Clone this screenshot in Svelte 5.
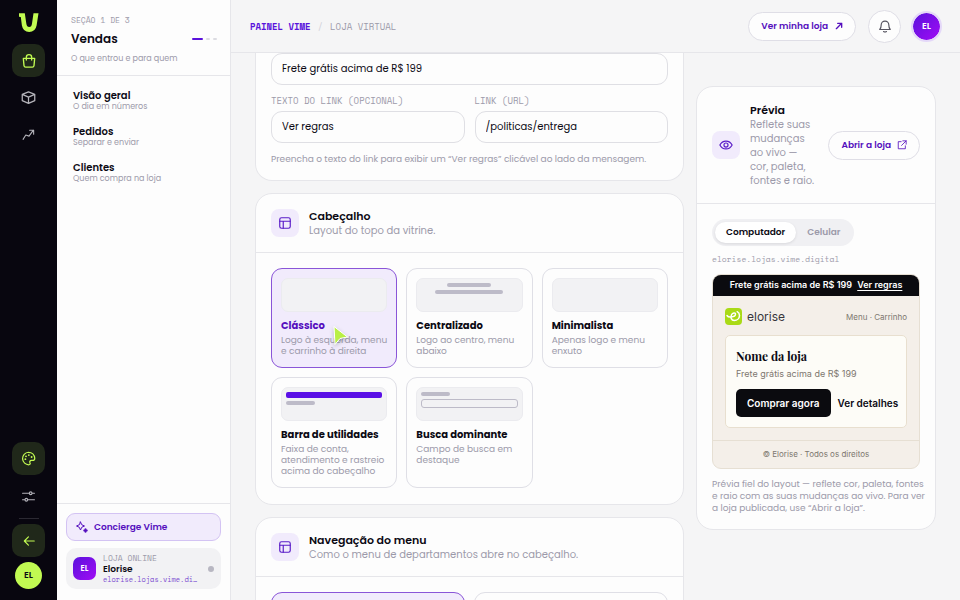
<script>
  let selected = $state("Clássico");
  let device = $state("Computador");
  let message = $state("Frete grátis acima de R$ 199");
  let linkText = $state("Ver regras");
  let linkUrl = $state("/politicas/entrega");

  const pages = [
    { name: "Visão geral", info: "O dia em números" },
    { name: "Pedidos", info: "Separar e enviar" },
    { name: "Clientes", info: "Quem compra na loja" },
  ];

  const headers = [
    { name: "Clássico", info: "Logo à esquerda, menu e carrinho à direita", bars: [] },
    { name: "Centralizado", info: "Logo ao centro, menu abaixo", bars: ["mid", "wide"] },
    { name: "Minimalista", info: "Apenas logo e menu enxuto", bars: [] },
    {
      name: "Barra de utilidades",
      info: "Faixa de conta, atendimento e rastreio acima do cabeçalho",
      bars: ["accent", "short"],
    },
    { name: "Busca dominante", info: "Campo de busca em destaque", bars: ["short", "search"] },
  ];
</script>

{#snippet layoutIcon()}
  <span class="badge">
    <svg class="icon" viewBox="0 0 24 24" width="14" height="14">
      <rect x="3" y="3" width="18" height="18" rx="3" />
      <path d="M3 9h18M9 9v12" />
    </svg>
  </span>
{/snippet}

<div class="shell">
  <nav class="rail" aria-label="Seções">
    <div class="rail-group">
      <svg class="logo" viewBox="0 0 20 19" width="20" height="19">
        <path
          d="M0 .3H5.800L7.300 10.500Q7.800 14 10.200 14T13 10.500L14.500.3H19.500L17.600 12.500Q16.300 19 10.200 19T2.900 12.500L1.800 4H.8Q0 4 0 3z"
        />
      </svg>
      <button class="rail-btn on" aria-label="Vendas">
        <svg class="icon" viewBox="0 0 24 24" width="16" height="16">
          <path d="M3.500 8h17l-1 11a2.500 2.500 0 0 1-2.500 2.200H7A2.500 2.500 0 0 1 4.500 19z" />
          <path d="M8 10.500V6.500a4 4 0 0 1 8 0v4" />
        </svg>
      </button>
      <button class="rail-btn" aria-label="Produtos">
        <svg class="icon" viewBox="0 0 24 24" width="15" height="15">
          <path d="M12 3l10 4v10l-10 4.500L2 17V7zM2 7l10 4.500L22 7M12 11.500v10" />
        </svg>
      </button>
      <button class="rail-btn" aria-label="Crescimento">
        <svg class="icon" viewBox="0 0 24 24" width="13" height="13">
          <path d="M2 21l5-8 6 2 8-11M14 4h7.500v7.500" />
        </svg>
      </button>
    </div>
    <div class="rail-group low">
      <button class="rail-btn on" aria-label="Aparência">
        <svg class="icon" viewBox="0 0 24 24" width="15" height="15">
          <path
            d="M12 2a10 10 0 1 0 1 20c2-.3 2-2 1.300-3.300-.8-2 .2-3.700 2.200-3.700H19c2 0 3-1.300 3-3.500C21.500 6 17.500 2 12 2z"
          />
          <path d="M7 13h.01M8 8.500h.01M12.500 6.500h.01M17 9.500h.01" stroke-width="3" />
        </svg>
      </button>
      <button class="rail-btn" aria-label="Ajustes">
        <svg class="icon" viewBox="0 0 24 24" width="13" height="13">
          <path d="M1 6h12M19 6h4M1 18h4M11 18h12" />
          <circle cx="16" cy="6" r="2.500" />
          <circle cx="8" cy="18" r="2.500" />
        </svg>
      </button>
      <span class="rail-line"></span>
      <button class="rail-btn on" aria-label="Voltar">
        <svg class="icon" viewBox="0 0 24 24" width="14" height="14">
          <path d="M21 12H4M11 5l-7 7 7 7" />
        </svg>
      </button>
      <button class="me">EL</button>
    </div>
  </nav>

  <aside class="side">
    <header class="side-head">
      <p class="mono tiny">SEÇÃO 1 DE 3</p>
      <div class="side-title">
        <h1>Vendas</h1>
        <span class="steps"><i class="now"></i><i></i><i></i></span>
      </div>
      <p class="muted small">O que entrou e para quem</p>
    </header>
    <ul class="pages">
      {#each pages as page}
        <li>
          <a href="#top">
            <strong>{page.name}</strong>
            <span>{page.info}</span>
          </a>
        </li>
      {/each}
    </ul>
    <footer class="side-foot">
      <button class="concierge">
        <svg class="icon" viewBox="0 0 24 24" width="12" height="12">
          <path d="M9 2l2.500 5.500L17 10l-5.500 2.500L9 18l-2.500-5.500L1 10l5.500-2.500z" />
          <path d="M19 16.500v5M16.500 19h5" stroke-width="4" />
        </svg>
        Concierge Vime
      </button>
      <div class="store">
        <span class="store-logo">EL</span>
        <div class="store-text">
          <span class="mono">LOJA ONLINE</span>
          <strong>Elorise</strong>
          <a class="mono" href="#loja">elorise.lojas.vime.digital</a>
        </div>
        <span class="dot"></span>
      </div>
    </footer>
  </aside>

  <main>
    <header class="topbar">
      <p class="mono crumbs"><b>PAINEL VIME</b><i>/</i><span>LOJA VIRTUAL</span></p>
      <button class="pill">
        Ver minha loja
        <svg class="icon bold" viewBox="0 0 24 24" width="8" height="8">
          <path d="M4 20L20 4M8 4h12v12" />
        </svg>
      </button>
      <button class="bell" aria-label="Notificações">
        <svg class="icon" viewBox="0 0 24 24" width="14" height="14">
          <path d="M3 18h18c-2-2-2.500-4-2.500-8a6.500 6.500 0 0 0-13 0c0 4-.5 6-2.500 8zM9.500 21.500q2.500 1.500 5 0" />
        </svg>
      </button>
      <button class="avatar">EL</button>
    </header>

    <div class="content">
      <div class="column">
        <section class="card cut">
          <input class="field" aria-label="Mensagem" bind:value={message} />
          <div class="two">
            <div>
              <label class="mono" for="link-text">TEXTO DO LINK (OPCIONAL)</label>
              <input class="field" id="link-text" bind:value={linkText} />
            </div>
            <div>
              <label class="mono" for="link-url">LINK (URL)</label>
              <input class="field" id="link-url" bind:value={linkUrl} />
            </div>
          </div>
          <p class="muted hint">
            Preencha o texto do link para exibir um “Ver regras” clicável ao lado da mensagem.
          </p>
        </section>

        <section class="card">
          <header class="card-head">
            {@render layoutIcon()}
            <div>
              <h2>Cabeçalho</h2>
              <p class="muted">Layout do topo da vitrine.</p>
            </div>
          </header>
          <div class="options">
            {#each headers as item}
              <button
                class="option"
                class:picked={selected === item.name}
                aria-pressed={selected === item.name}
                onclick={() => (selected = item.name)}
              >
                <span class="thumb">
                  {#each item.bars as bar}
                    <i class={bar}></i>
                  {/each}
                </span>
                <strong>{item.name}</strong>
                <span class="muted">{item.info}</span>
              </button>
            {/each}
          </div>
        </section>

        <section class="card">
          <header class="card-head">
            {@render layoutIcon()}
            <div>
              <h2>Navegação do menu</h2>
              <p class="muted">Como o menu de departamentos abre no cabeçalho.</p>
            </div>
          </header>
          <div class="options pair">
            <button class="option picked" aria-label="Menu suspenso"><span class="thumb"></span></button>
            <button class="option" aria-label="Menu lateral"><span class="thumb"></span></button>
          </div>
        </section>
      </div>

      <aside class="card preview">
        <header class="card-head">
          <span class="badge">
            <svg class="icon" viewBox="0 0 24 24" width="14" height="14">
              <path d="M1.500 12C6 3 18 3 22.500 12 18 21 6 21 1.500 12z" />
              <circle cx="12" cy="12" r="3.500" />
            </svg>
          </span>
          <div>
            <h2>Prévia</h2>
            <p class="muted">Reflete suas mudanças ao vivo — cor, paleta, fontes e raio.</p>
          </div>
          <button class="pill">
            Abrir a loja
            <svg class="icon" viewBox="0 0 24 24" width="10" height="10">
              <path d="M10 4H3v17h17v-7M14 2h8v8M22 2L11 13" />
            </svg>
          </button>
        </header>
        <div class="preview-body">
          <div class="tabs">
            {#each ["Computador", "Celular"] as tab}
              <button class:on={device === tab} onclick={() => (device = tab)}>{tab}</button>
            {/each}
          </div>
          <p class="mono address">elorise.lojas.vime.digital</p>
          <div class="shop">
            <p class="shop-bar">{message} <a href="#regras">{linkText}</a></p>
            <div class="shop-head">
              <svg viewBox="0 0 17 17" width="17" height="17">
                <rect width="17" height="17" rx="4" fill="#a9da16" />
                <path
                  d="M2 7.500c1 1.500 2.500 1.700 4 1.500 2.500-.2 4.500-1 4.500-2.700 0-2-3-1.700-4 .5-1.200 2.700-.2 5.700 2.700 5.700 3 0 5.300-2.200 5.300-5 0-1.800-.9-3.100-2.300-3.800"
                  fill="none"
                  stroke="#fff"
                  stroke-width="1.500"
                  stroke-linecap="round"
                />
              </svg>
              <span class="brand">elorise</span>
              <span class="shop-menu">Menu · Carrinho</span>
            </div>
            <div class="shop-card">
              <h3>Nome da loja</h3>
              <p>{message}</p>
              <div class="shop-actions">
                <button class="buy">Comprar agora</button>
                <button>Ver detalhes</button>
              </div>
            </div>
            <p class="shop-foot">© Elorise · Todos os direitos</p>
          </div>
          <p class="muted note">
            Prévia fiel do layout — reflete cor, paleta, fontes e raio com as suas mudanças ao
            vivo. Para ver a loja publicada, use “Abrir a loja”.
          </p>
        </div>
      </aside>
    </div>
  </main>

  <svg class="cursor" viewBox="0 0 18 24" width="18" height="24">
    <path d="M2 2.500l13.500 10.500-7.500 1.500-5 6z" />
  </svg>
</div>

<style>
  :global(body) {
    margin: 0;
  }
  .shell {
    --ink: #0c0a14;
    --muted: #9c9aaa;
    --line: #e6e6ea;
    --purple: #550fbe;
    --soft: #f1ebfc;
    --lime: #c1fa52;
    position: relative;
    display: flex;
    height: 100vh;
    overflow: hidden;
    background: #f5f5f6;
    color: var(--ink);
    font-family: Poppins, Inter, sans-serif;
    font-size: 10px;
  }
  .shell * {
    box-sizing: border-box;
  }
  h1,
  h2,
  h3,
  p,
  ul {
    margin: 0;
    padding: 0;
  }
  h1,
  h2 {
    font-weight: 600;
  }
  button,
  input {
    margin: 0;
    padding: 0;
    border: 0;
    background: none;
    color: inherit;
    font: inherit;
  }
  a {
    color: inherit;
    text-decoration: none;
  }
  .icon {
    flex: none;
    fill: none;
    stroke: currentColor;
    stroke-width: 2;
    stroke-linecap: round;
    stroke-linejoin: round;
  }
  .icon.bold {
    stroke-width: 4;
  }
  .mono {
    font-family: "Space Mono", "Liberation Mono", monospace;
    color: var(--muted);
  }
  .muted {
    color: var(--muted);
  }

  /* RAIL */
  .rail {
    display: flex;
    flex: none;
    flex-direction: column;
    justify-content: space-between;
    width: 57px;
    padding: 13px 0 11px;
    background: #08060f;
    color: #b4b3ba;
  }
  .rail-group {
    display: flex;
    flex-direction: column;
    align-items: center;
    gap: 4px;
  }
  .rail-group.low {
    gap: 5px;
  }
  .logo {
    flex: none;
    margin-bottom: 8px;
    fill: var(--lime);
  }
  .rail-btn {
    display: grid;
    flex: none;
    place-items: center;
    width: 33px;
    height: 33px;
    border-radius: 10px;
  }
  .rail-btn.on {
    background: #20281a;
    color: var(--lime);
  }
  .rail-line {
    width: 20px;
    height: 1px;
    background: #2b2932;
  }
  .me {
    flex: none;
    width: 27px;
    height: 27px;
    border-radius: 50%;
    background: var(--lime);
    color: var(--ink);
    font-size: 9px;
    font-weight: 600;
  }

  /* SIDEBAR */
  .side {
    display: flex;
    flex: none;
    flex-direction: column;
    width: 174px;
    border-right: 1px solid var(--line);
    background: #fdfdfd;
  }
  .side-head {
    padding: 14px 13px 10px 14px;
    border-bottom: 1px solid var(--line);
  }
  .tiny {
    font-size: 8px;
    line-height: 12px;
  }
  .side-title {
    display: flex;
    align-items: center;
    justify-content: space-between;
    margin: 4px 0;
  }
  h1 {
    font-size: 12px;
    line-height: 18px;
  }
  .steps {
    display: flex;
    gap: 3px;
  }
  .steps i {
    width: 4px;
    height: 2px;
    border-radius: 1px;
    background: #dcdce2;
  }
  .steps .now {
    width: 11px;
    background: #5a12dc;
  }
  .small {
    font-size: 8px;
    line-height: 13px;
  }
  .pages {
    flex: 1;
    padding: 13px 16px;
    list-style: none;
  }
  .pages a {
    display: flex;
    flex-direction: column;
    padding-bottom: 13px;
  }
  .pages strong {
    font-size: 10px;
    font-weight: 600;
    line-height: 13px;
  }
  .pages span {
    color: var(--muted);
    font-size: 8px;
    line-height: 10px;
  }
  .side-foot {
    display: flex;
    flex-direction: column;
    gap: 7px;
    padding: 9px 9px 11px;
    border-top: 1px solid var(--line);
  }
  .concierge {
    display: flex;
    align-items: center;
    gap: 6px;
    height: 28px;
    padding: 0 9px;
    border: 1px solid #d3c3f3;
    border-radius: 9px;
    background: var(--soft);
    color: var(--purple);
    font-size: 9px;
    font-weight: 600;
  }
  .store {
    display: flex;
    align-items: center;
    gap: 7px;
    height: 41px;
    padding: 0 7px;
    border-radius: 10px;
    background: #f2f2f4;
  }
  .store-logo,
  .avatar {
    background: linear-gradient(135deg, #5a12dc, #a10cf5);
    color: #fff;
    font-size: 8px;
    font-weight: 600;
  }
  .store-logo {
    display: grid;
    flex: none;
    place-items: center;
    width: 23px;
    height: 23px;
    border-radius: 7px;
  }
  .store-text {
    display: flex;
    flex: 1;
    flex-direction: column;
    min-width: 0;
    font-size: 8px;
    line-height: 9px;
  }
  .store-text strong {
    font-size: 9px;
    font-weight: 600;
    line-height: 12px;
  }
  .store-text a {
    overflow: hidden;
    color: #7a4bd0;
    font-size: 7px;
    text-overflow: ellipsis;
    white-space: nowrap;
  }
  .dot {
    flex: none;
    width: 6px;
    height: 6px;
    border-radius: 50%;
    background: #b8b7c2;
  }

  /* TOPBAR */
  main {
    display: flex;
    flex: 1;
    flex-direction: column;
    min-width: 0;
  }
  .topbar {
    display: flex;
    flex: none;
    align-items: center;
    height: 53px;
    padding: 0 18px 0 19px;
    border-bottom: 1px solid var(--line);
  }
  .crumbs {
    display: flex;
    flex: 1;
    gap: 7px;
    font-size: 9px;
  }
  .crumbs b {
    color: #5a12dc;
  }
  .crumbs i {
    color: #d0d0d8;
    font-style: normal;
  }
  .pill {
    display: flex;
    flex: none;
    align-items: center;
    gap: 7px;
    height: 29px;
    padding: 0 12px;
    border: 1px solid #dfdee6;
    border-radius: 15px;
    background: #fdfdfd;
    color: var(--purple);
    font-size: 9px;
    font-weight: 600;
  }
  .bell {
    display: grid;
    place-items: center;
    width: 33px;
    height: 33px;
    margin: 0 10px 0 12px;
    border: 1px solid #dfdee6;
    border-radius: 50%;
    background: #fdfdfd;
    color: #55535f;
  }
  .avatar {
    width: 31px;
    height: 31px;
    border: 2px solid #e4d8f8;
    border-radius: 50%;
    background-clip: padding-box;
    font-size: 9px;
  }

  /* CONTENT */
  .content {
    display: grid;
    flex: 1;
    grid-template-columns: minmax(0, 1fr) 240px;
    gap: 12px;
    align-items: start;
    min-height: 0;
    padding: 0 24px;
    overflow: hidden;
  }
  .column {
    display: flex;
    flex-direction: column;
    gap: 12px;
  }
  .card {
    border: 1px solid var(--line);
    border-radius: 17px;
    background: #fdfdfd;
  }
  .cut {
    padding: 0 15px 15px;
    border-top: 0;
    border-radius: 0 0 17px 17px;
  }
  .field {
    display: block;
    width: 100%;
    height: 32px;
    padding: 0 10px;
    border: 1px solid #dfdfe4;
    border-radius: 11px;
    outline: 0;
    background: #fdfdfd;
  }
  .two {
    display: grid;
    grid-template-columns: 1fr 1fr;
    gap: 10px;
    margin: 10px 0;
  }
  .two label {
    display: block;
    margin-bottom: 4px;
    font-size: 9px;
    line-height: 12px;
  }
  .hint {
    font-size: 9px;
    line-height: 12px;
  }
  .card-head {
    display: flex;
    align-items: center;
    gap: 10px;
    padding: 14px 15px;
    border-bottom: 1px solid var(--line);
  }
  .card-head > div {
    flex: 1;
  }
  .card-head h2 {
    font-size: 11px;
    line-height: 16px;
  }
  .card-head p {
    line-height: 14px;
  }
  .badge {
    display: grid;
    flex: none;
    place-items: center;
    width: 28px;
    height: 28px;
    border-radius: 8px;
    background: var(--soft);
    color: #5a1cc8;
  }
  .options {
    display: grid;
    grid-template-columns: repeat(3, 1fr);
    gap: 9px;
    padding: 15px 15px 16px;
  }
  .options.pair {
    grid-template-columns: 1fr 1fr;
  }
  .option {
    display: flex;
    flex-direction: column;
    padding: 9px 9px 10px;
    border: 1px solid #dfdfe6;
    border-radius: 11px;
    text-align: left;
  }
  .option.picked {
    border-color: #8a55d8;
    background: var(--soft);
  }
  .option strong {
    margin-top: 6px;
    font-size: 10px;
    font-weight: 700;
    line-height: 16px;
  }
  .picked strong {
    color: var(--purple);
  }
  .option .muted {
    margin-top: 1px;
    font-size: 9px;
    line-height: 11px;
  }
  .thumb {
    display: flex;
    flex-direction: column;
    align-items: center;
    gap: 3px;
    width: 100%;
    height: 34px;
    padding: 4px;
    border: 1px solid #ebebef;
    border-radius: 7px;
    background: #f2f2f4;
  }
  .thumb i {
    height: 4px;
    border-radius: 2px;
    background: #bdbbc8;
  }
  .thumb .mid {
    width: 44px;
  }
  .thumb .wide {
    width: 68px;
  }
  .thumb .short {
    align-self: flex-start;
    width: 29px;
  }
  .thumb .accent {
    width: 100%;
    height: 6px;
    background: #5a0fe6;
  }
  .thumb .search {
    width: 100%;
    height: 9px;
    border: 1px solid #bdbbc8;
    border-radius: 3px;
    background: none;
  }

  /* PREVIEW */
  .preview {
    margin-top: 33px;
  }
  .preview .card-head {
    padding: 15px;
  }
  .preview .card-head > div {
    padding-right: 4px;
  }
  .preview .pill {
    gap: 6px;
  }
  .preview-body {
    padding: 15px;
  }
  .tabs {
    display: flex;
    width: fit-content;
    padding: 3px;
    border-radius: 14px;
    background: #f0f0f3;
  }
  .tabs button {
    height: 21px;
    padding: 0 11px;
    border-radius: 11px;
    color: var(--muted);
    font-size: 9px;
    font-weight: 600;
  }
  .tabs .on {
    background: #fff;
    box-shadow: 0 1px 3px rgba(12, 10, 20, 0.1);
    color: var(--ink);
  }
  .address {
    margin: 6px 0 8px;
    font-size: 8px;
    line-height: 14px;
  }
  .shop {
    overflow: hidden;
    border: 1px solid #e6dfd3;
    border-radius: 9px;
    background: #f4efe9;
    font-family: Inter, sans-serif;
    font-size: 9px;
  }
  .shop-bar {
    margin: -1px -1px 0;
    background: #0b0b0f;
    color: #fff;
    font-size: 9px;
    font-weight: 600;
    line-height: 22px;
    text-align: center;
  }
  .shop-bar a {
    margin-left: 3px;
    text-decoration: underline;
    text-underline-offset: 2px;
  }
  .shop-head {
    display: flex;
    align-items: center;
    gap: 5px;
    padding: 12px 12px 10px;
  }
  .brand {
    flex: 1;
    color: #38363c;
    font-size: 12px;
    line-height: 17px;
  }
  .shop-menu {
    color: #7d776f;
    font-size: 8px;
  }
  .shop-card {
    margin: 0 12px 12px;
    padding: 11px 10px 10px;
    border: 1px solid #e8dfcf;
    border-radius: 5px;
    background: #fdfcf7;
  }
  .shop-card h3 {
    font-family: "Playfair Display", "Liberation Serif", serif;
    font-size: 12px;
    font-weight: 700;
    line-height: 18px;
  }
  .shop-card p {
    margin: 2px 0 8px;
    color: #7d776f;
    line-height: 14px;
  }
  .shop-actions {
    display: flex;
    align-items: center;
    gap: 7px;
    font-size: 10px;
    font-weight: 600;
    white-space: nowrap;
  }
  .buy {
    height: 28px;
    padding: 0 11px;
    border-radius: 5px;
    background: #0b0b0f;
    color: #fff;
  }
  .shop-foot {
    border-top: 1px solid #e6dfd3;
    color: #7d776f;
    font-size: 8px;
    line-height: 27px;
    text-align: center;
  }
  .note {
    margin-top: 9px;
    margin-right: -8px;
    font-size: 9px;
    line-height: 12px;
  }

  .cursor {
    position: absolute;
    top: 324px;
    left: 332px;
    fill: #b9ef45;
    stroke: #fff;
    stroke-width: 1;
    stroke-linejoin: round;
    filter: drop-shadow(0 2px 2px rgba(12, 10, 20, 0.25));
  }
</style>
